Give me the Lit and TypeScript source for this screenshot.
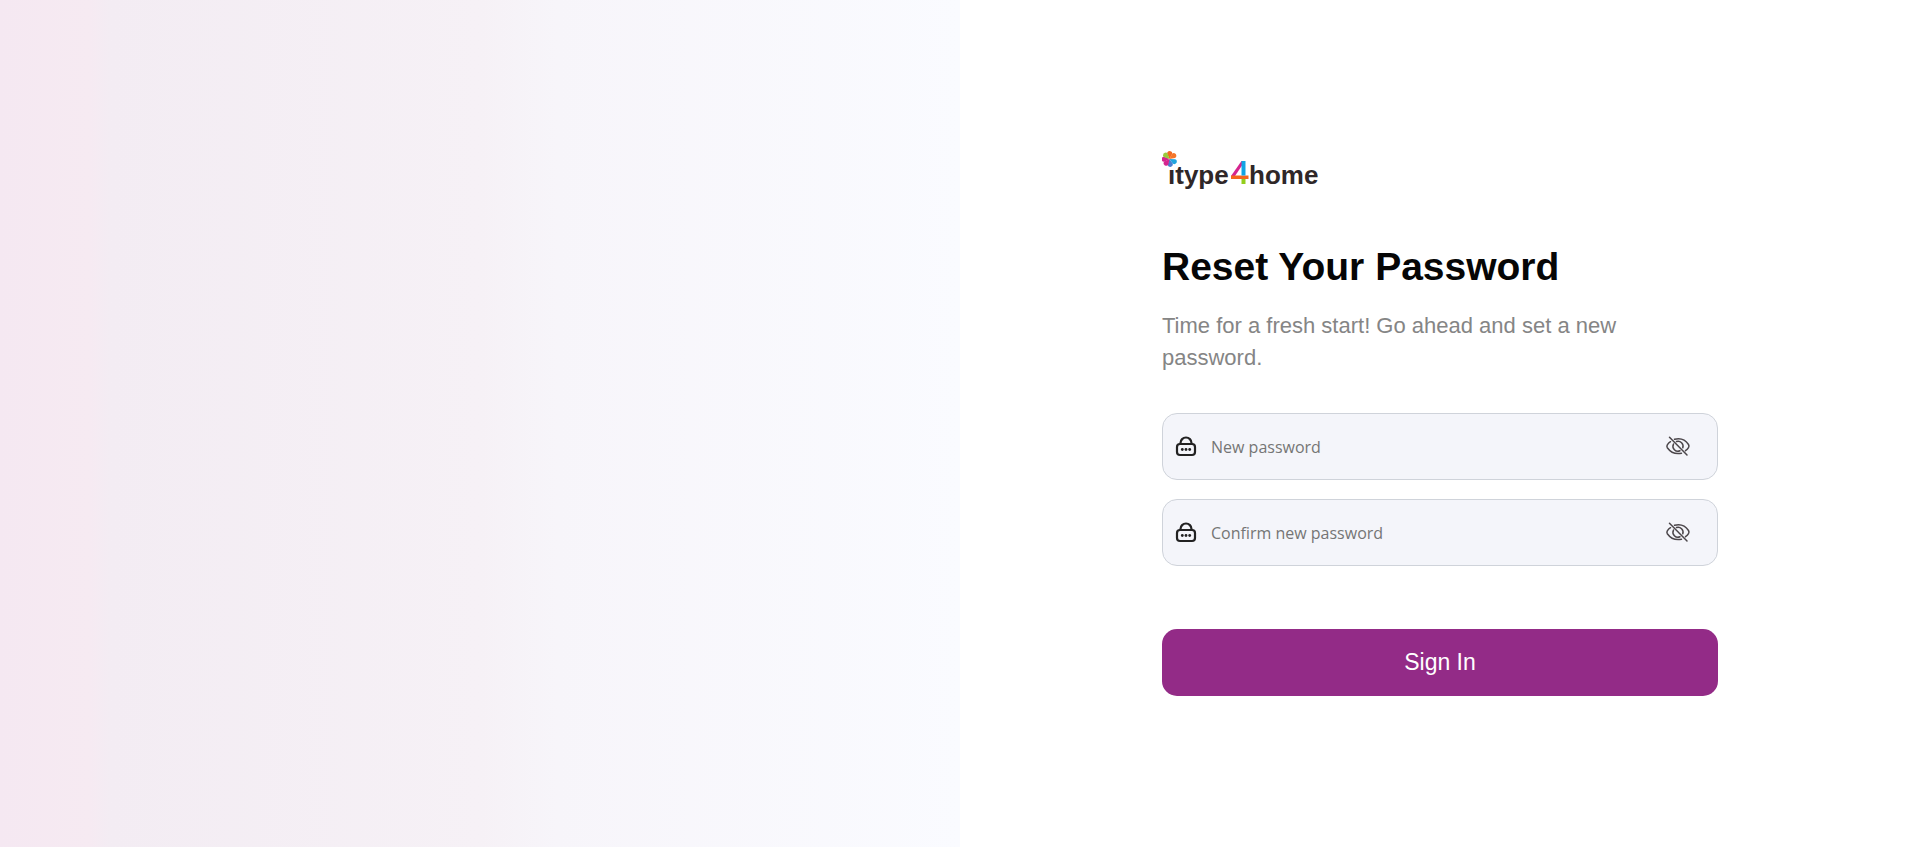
import { LitElement, html, css, svg } from "lit";
import { customElement, property, state } from "lit/decorators.js";

@customElement("brand-logo")
class BrandLogo extends LitElement {
  static styles = css`
    :host { display: block; line-height: 0; }
    .word { font: 700 26px "Liberation Sans", Arial, sans-serif; fill: #2f2728; }
  `;
  render() {
    return html`<svg width="160" height="42" viewBox="0 0 160 42" role="img" aria-label="itype4home">
      <g>
        ${[
          [-88, "#f26a21"], [-38, "#f5762a"], [28, "#1fa5de"], [82, "#4a7fd0"], [128, "#d5258f"], [178, "#d5258f"], [224, "#9aca3c"],
        ].map(([a, c]) => svg`<path transform="translate(7.5 8) rotate(${a})" d="M0 0L5 -2.500Q7.500 -3 8 0Q7.500 3 5 2.500Z" fill="${c}"/>`)}
      </g>
      <text class="word" x="6" y="33">ıtype</text>
      <path d="M79.500 10H83L73 25H69Z" fill="#d5258f"/>
      <path d="M69 24.500H86.500V28H69Z" fill="#f5661d"/>
      <path d="M79.500 10H83.500V24.500H79.500Z" fill="#12a4e4"/>
      <path d="M79.500 28H83.500V33H79.500Z" fill="#93ce1c"/>
      <text class="word" x="87" y="33">home</text>
    </svg>`;
  }
}

@customElement("password-field")
class PasswordField extends LitElement {
  @property() label = "";
  @state() shown = false;

  static styles = css`
    :host { display: block; }
    .field {
      display: flex; align-items: center; gap: 14px; box-sizing: border-box;
      height: 67px; padding: 0 26px 0 12px;
      background: #f4f5fa; border: 1px solid #cfd3da; border-radius: 15px;
    }
    .lock { display: flex; }
    .input {
      flex: 1; min-width: 0; height: 48px; padding: 0; border: 0; outline: 0; background: none;
      font: 16px "Segoe UI", "Open Sans", sans-serif; color: #222;
    }
    .input::placeholder { color: #757575; opacity: 1; }
    .toggle { display: flex; padding: 0; border: 0; background: none; cursor: pointer; }
  `;
  render() {
    return html`<div class="field">
      <label class="lock" for="pw" aria-label=${this.label}>
        <svg width="22" height="22" viewBox="0 0 22 22" fill="none" stroke="#222" stroke-width="2.200">
          <rect x="2" y="8" width="18" height="11" rx="3"/>
          <path d="M5.500 8V7a5.500 5.500 0 0 1 11 0V8"/>
          <g fill="#222" stroke="none"><circle cx="7.300" cy="13.500" r="1.400"/><circle cx="11" cy="13.500" r="1.400"/><circle cx="14.700" cy="13.500" r="1.400"/></g>
        </svg>
      </label>
      <input id="pw" class="input" type=${this.shown ? "text" : "password"} placeholder=${this.label} />
      <button class="toggle" type="button" aria-label="Show password" @click=${() => (this.shown = !this.shown)}>
        <svg width="26" height="22" viewBox="0 0 26 22" fill="none" stroke="#4b464a" stroke-width="1.500" stroke-linecap="round">
          <path d="M4.500 1.300L22 19"/>
          <path d="M9.500 3.300Q18.500 1 23.500 8.500Q24.500 10.200 23.500 11.700Q22.500 13.300 20.500 14.700"/>
          <path d="M5.500 5.700Q3.500 7 2.300 8.800Q1.500 10.200 2.300 11.700Q7.500 19 16.500 17.200"/>
          <path d="M11.500 5.500A5 5 0 0 1 17.800 11.800"/>
          <path d="M8.500 8A5 5 0 0 0 15 14.800"/>
        </svg>
      </button>
    </div>`;
  }
}

@customElement("app-root")
class AppRoot extends LitElement {
  static styles = css`
    :host {
      display: grid; grid-template-columns: 1fr 1fr; min-height: 100vh;
      background: #fff; font-family: Arial, "Liberation Sans", sans-serif;
    }
    .art { background: linear-gradient(90deg, #f5e8f2 0, #f6eaf2 90px, #f3ecf3 110px, #f6f1f6 50%, #f7f5fa 58%, #fafbff 100%); }
    .panel { display: flex; align-items: center; justify-content: center; padding: 24px; }
    .form { width: 100%; max-width: 556px; }
    .title { margin: 51px 0 0; font-size: 39px; line-height: 46px; font-weight: 700; color: #060606; }
    .lead { margin: 20px 0 0; font-size: 22px; line-height: 32px; color: #858585; max-width: 500px; }
    .fields { display: grid; gap: 19px; margin-top: 39px; }
    .submit {
      display: block; width: 100%; height: 67px; margin-top: 63px; border: 0; border-radius: 15px;
      background: #932b87; color: #fff; font: 23px Arial, "Liberation Sans", sans-serif; cursor: pointer;
    }
  `;
  render() {
    return html`
      <div class="art"></div>
      <main class="panel">
        <form class="form" @submit=${(e: Event) => e.preventDefault()}>
          <brand-logo></brand-logo>
          <h1 class="title">Reset Your Password</h1>
          <p class="lead">Time for a fresh start! Go ahead and set a new password.</p>
          <div class="fields">
            <password-field label="New password"></password-field>
            <password-field label="Confirm new password"></password-field>
          </div>
          <button class="submit" type="submit">Sign In</button>
        </form>
      </main>`;
  }
}
